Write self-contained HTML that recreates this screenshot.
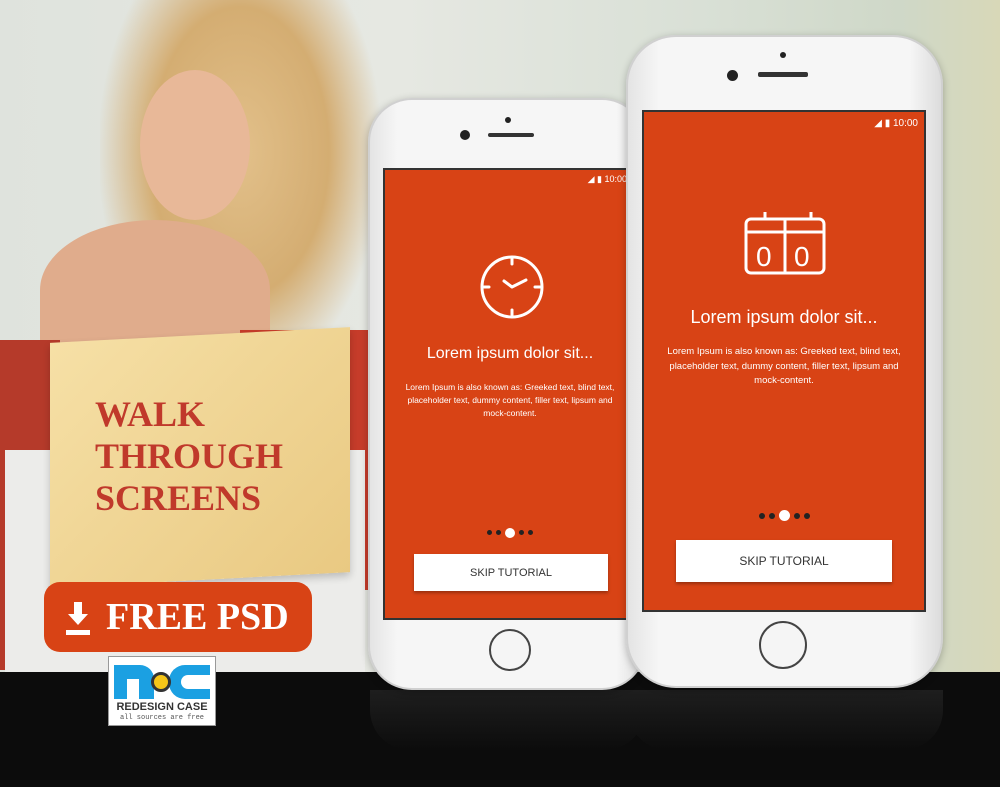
<!DOCTYPE html>
<html><head><style>
*{margin:0;padding:0;box-sizing:border-box}
body{width:1000px;height:787px;overflow:hidden;position:relative;font-family:"Liberation Sans",sans-serif;background:#0c0c0c}
.a{position:absolute}
.top{left:0;top:0;width:1000px;height:672px;background:linear-gradient(90deg,#dfe3dd 0%,#e6e8e2 40%,#d9e0d6 70%,#cfd8c8 90%,#d8d8b8 100%)}
.phone{background:linear-gradient(90deg,#e4e4e4,#f6f6f6 10%,#f6f6f6 90%,#dcdcdc);border:2px solid #d0d0d0;box-shadow:0 2px 8px rgba(0,0,0,.25)}
.scr{background:#d84315;border:2px solid #333;overflow:hidden;color:#fff;text-align:center}
.btn{background:#fff;color:#333;font-size:11px;display:flex;align-items:center;justify-content:center;box-shadow:0 2px 3px rgba(0,0,0,.3)}
.home{border:2px solid #444;border-radius:50%;background:#f5f5f5}
.dot{display:inline-block;border-radius:50%;background:#222;margin:0 2px;vertical-align:middle}
</style></head><body>
<div class="a top"></div>
<div class="a" style="left:100px;top:0;width:280px;height:380px;background:radial-gradient(ellipse at 50% 40%,#e2c08a 0%,#d4ad72 45%,rgba(210,180,120,0) 72%)"></div>
<div class="a" style="left:140px;top:70px;width:110px;height:150px;border-radius:50%;background:#e8b898"></div>
<div class="a" style="left:40px;top:220px;width:230px;height:140px;border-radius:50% 50% 0 0;background:#e0ac8c"></div>
<div class="a" style="left:0;top:340px;width:60px;height:330px;background:#b53a2a"></div>
<div class="a" style="left:240px;top:330px;width:130px;height:260px;background:#c63c2a"></div>
<div class="a" style="left:5px;top:450px;width:360px;height:222px;background:#ececea"></div>
<div class="a" style="left:50px;top:335px;width:300px;height:245px;background:linear-gradient(135deg,#f6e0a6,#e9c982);transform:skewY(-3deg);box-shadow:0 4px 8px rgba(0,0,0,.2)"></div>
<div class="a" style="left:95px;top:393px;width:260px;font:bold 36px/42px 'Liberation Serif',serif;color:#c0392b">WALK<br>THROUGH<br>SCREENS</div>
<div class="a" style="left:44px;top:582px;width:268px;height:70px;border-radius:16px;background:#d84315;color:#fff;font:bold 38px/70px 'Liberation Serif',serif;padding-left:62px">FREE PSD</div>
<svg class="a" style="left:64px;top:600px" width="28" height="36" viewBox="0 0 28 36"><path d="M10 2h8v12h6L14 25 4 14h6z" fill="#fff"/><rect x="2" y="30" width="24" height="5" fill="#fff"/></svg>
<div class="a" style="left:108px;top:656px;width:108px;height:70px;background:#fff;border:1px solid #999">
 <div class="a" style="left:5px;top:8px;width:40px;height:34px;background:#1ba0e2;border-radius:0 14px 0 0"></div>
 <div class="a" style="left:18px;top:22px;width:12px;height:20px;background:#fff"></div>
 <div class="a" style="left:60px;top:8px;width:41px;height:34px;background:#1ba0e2;border-radius:16px 0 0 16px"></div>
 <div class="a" style="left:72px;top:18px;width:29px;height:14px;background:#fff;border-radius:7px 0 0 7px"></div>
 <div class="a" style="left:42px;top:15px;width:20px;height:20px;border-radius:50%;background:#f5c518;border:3px solid #333"></div>
 <div class="a" style="left:5px;top:44px;width:96px;font:bold 11px 'Liberation Sans',sans-serif;color:#333;text-align:center">REDESIGN CASE</div>
 <div class="a" style="left:5px;top:57px;width:96px;font:7px 'Liberation Mono',monospace;color:#555;text-align:center">all sources are free</div>
</div>
<div class="a" style="left:370px;top:690px;width:275px;height:60px;border-radius:0 0 40px 40px;background:linear-gradient(#1e1e1e,#0c0c0c)"></div>
<div class="a" style="left:628px;top:690px;width:315px;height:60px;border-radius:0 0 40px 40px;background:linear-gradient(#1e1e1e,#0c0c0c)"></div>
<div class="a phone" style="left:368px;top:98px;width:278px;height:592px;border-radius:44px"></div>
<div class="a" style="left:505px;top:117px;width:6px;height:6px;border-radius:50%;background:#222"></div>
<div class="a" style="left:460px;top:130px;width:10px;height:10px;border-radius:50%;background:#222"></div>
<div class="a" style="left:488px;top:133px;width:46px;height:4px;border-radius:2px;background:#333"></div>
<div class="a scr" style="left:383px;top:168px;width:250px;height:452px">
 <div style="position:absolute;right:4px;top:4px;font-size:9px">◢ ▮ 10:00</div>
 <svg style="position:absolute;left:94px;top:84px" width="66" height="66" viewBox="0 0 66 66"><circle cx="33" cy="33" r="30" fill="none" stroke="#fff" stroke-width="3"/><path d="M33 5v5M33 56v5M5 33h5M56 33h5M33 33l-8-6M33 33l14-7" stroke="#fff" stroke-width="3" stroke-linecap="round"/></svg>
 <div style="position:absolute;left:0;width:250px;top:175px;font-size:16px">Lorem ipsum dolor sit...</div>
 <div style="position:absolute;left:18px;width:214px;top:211px;font-size:8.5px;line-height:13px">Lorem Ipsum is also known as: Greeked text, blind text, placeholder text, dummy content, filler text, lipsum and mock-content.</div>
 <div style="position:absolute;left:0;width:250px;top:354px"><span class="dot" style="width:5px;height:5px"></span><span class="dot" style="width:5px;height:5px"></span><span class="dot" style="width:10px;height:10px;background:#fff"></span><span class="dot" style="width:5px;height:5px"></span><span class="dot" style="width:5px;height:5px"></span></div>
 <div class="btn" style="position:absolute;left:29px;top:384px;width:194px;height:37px">SKIP TUTORIAL</div>
</div>
<div class="a home" style="left:489px;top:629px;width:42px;height:42px"></div>
<div class="a phone" style="left:626px;top:35px;width:317px;height:653px;border-radius:50px"></div>
<div class="a" style="left:780px;top:52px;width:6px;height:6px;border-radius:50%;background:#222"></div>
<div class="a" style="left:727px;top:70px;width:11px;height:11px;border-radius:50%;background:#222"></div>
<div class="a" style="left:758px;top:72px;width:50px;height:5px;border-radius:2px;background:#333"></div>
<div class="a scr" style="left:642px;top:110px;width:284px;height:502px">
 <div style="position:absolute;right:6px;top:6px;font-size:10px">◢ ▮ 10:00</div>
 <svg style="position:absolute;left:99px;top:98px" width="84" height="66" viewBox="0 0 84 66"><path d="M22 2v8M68 2v8" stroke="#fff" stroke-width="3"/><rect x="3" y="9" width="78" height="54" rx="5" fill="none" stroke="#fff" stroke-width="3"/><path d="M3 22h78M42 9v54" stroke="#fff" stroke-width="3"/><text x="13" y="56" fill="#fff" font-size="28" font-family="Liberation Sans">0</text><text x="51" y="56" fill="#fff" font-size="28" font-family="Liberation Sans">0</text></svg>
 <div style="position:absolute;left:0;width:280px;top:195px;font-size:18px">Lorem ipsum dolor sit...</div>
 <div style="position:absolute;left:20px;width:240px;top:233px;font-size:9.5px;line-height:14.5px">Lorem Ipsum is also known as: Greeked text, blind text, placeholder text, dummy content, filler text, lipsum and mock-content.</div>
 <div style="position:absolute;left:0;width:280px;top:395px"><span class="dot" style="width:6px;height:6px"></span><span class="dot" style="width:6px;height:6px"></span><span class="dot" style="width:11px;height:11px;background:#fff"></span><span class="dot" style="width:6px;height:6px"></span><span class="dot" style="width:6px;height:6px"></span></div>
 <div class="btn" style="position:absolute;left:32px;top:428px;width:216px;height:42px;font-size:12px">SKIP TUTORIAL</div>
</div>
<div class="a home" style="left:759px;top:621px;width:48px;height:48px"></div>
</body></html>
